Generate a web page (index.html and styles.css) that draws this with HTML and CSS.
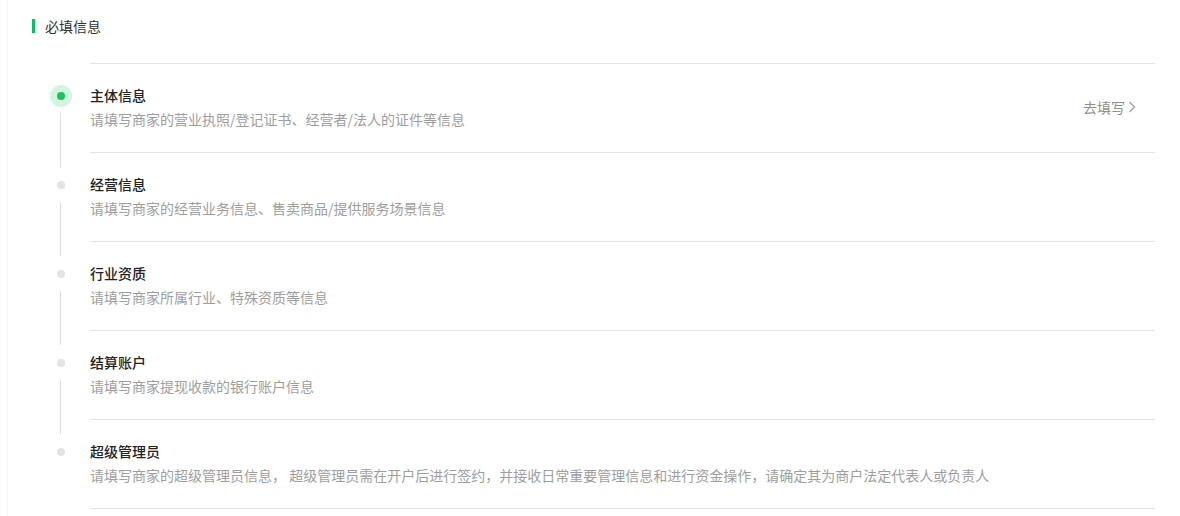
FILE: index.html
```html
<!DOCTYPE html>
<html lang="zh-CN">
<head>
<meta charset="utf-8">
<title>必填信息</title>
<link rel="stylesheet" href="styles.css">
</head>
<body>
<div class="page">
  <div class="section-head">
    <span class="section-bar"></span>
    <span class="section-title">必填信息</span>
  </div>
  <div class="steps">
    <div class="steps-top"></div>
    <div class="step">
      <div class="step-axis">
        <span class="dot dot-active"><span class="dot-core"></span></span>
        <span class="axis-line"></span>
      </div>
      <div class="step-body">
        <div class="step-text">
          <div class="step-title">主体信息</div>
          <div class="step-desc">请填写商家的营业执照/登记证书、经营者/法人的证件等信息</div>
        </div>
        <a class="step-action">去填写<svg class="chev" width="8" height="12" viewBox="0 0 8 12"><polyline points="1.5,1 6.5,6 1.5,11" fill="none" stroke="#9a9a9a" stroke-width="1.2"/></svg></a>
      </div>
    </div>
    <div class="step">
      <div class="step-axis">
        <span class="dot"></span>
        <span class="axis-line"></span>
      </div>
      <div class="step-body">
        <div class="step-text">
          <div class="step-title">经营信息</div>
          <div class="step-desc">请填写商家的经营业务信息、售卖商品/提供服务场景信息</div>
        </div>
      </div>
    </div>
    <div class="step">
      <div class="step-axis">
        <span class="dot"></span>
        <span class="axis-line"></span>
      </div>
      <div class="step-body">
        <div class="step-text">
          <div class="step-title">行业资质</div>
          <div class="step-desc">请填写商家所属行业、特殊资质等信息</div>
        </div>
      </div>
    </div>
    <div class="step">
      <div class="step-axis">
        <span class="dot"></span>
        <span class="axis-line"></span>
      </div>
      <div class="step-body">
        <div class="step-text">
          <div class="step-title">结算账户</div>
          <div class="step-desc">请填写商家提现收款的银行账户信息</div>
        </div>
      </div>
    </div>
    <div class="step">
      <div class="step-axis">
        <span class="dot"></span>
      </div>
      <div class="step-body">
        <div class="step-text">
          <div class="step-title">超级管理员</div>
          <div class="step-desc">请填写商家的超级管理员信息， 超级管理员需在开户后进行签约，并接收日常重要管理信息和进行资金操作，请确定其为商户法定代表人或负责人</div>
        </div>
      </div>
    </div>
  </div>
</div>
</body>
</html>
```

FILE: styles.css
```css
* { box-sizing: border-box; }
html, body {
  margin: 0;
  padding: 0;
  background: #fff;
}
body {
  font-family: "Noto Sans CJK SC", "Noto Sans", sans-serif;
  font-size: 14px;
  color: #333;
}
.page {
  margin-left: 7px;
  border-left: 1px solid #f5f5f5;
  min-height: 516px;
  padding: 16px 25px 0 24px;
}
.section-head {
  display: flex;
  align-items: center;
  height: 20px;
}
.section-bar {
  width: 3px;
  height: 14px;
  background: #07c160;
  margin-right: 10px;
}
.section-title {
  font-size: 14px;
  line-height: 20px;
  color: #333;
}
.steps {
  margin-top: 27px;
}
.steps-top {
  height: 1px;
  margin-left: 58px;
  background: #e5e5e5;
}
.step {
  display: flex;
}
.step-axis {
  position: relative;
  width: 58px;
  flex: none;
}
.dot {
  position: absolute;
  left: 25px;
  top: 28px;
  width: 8px;
  height: 8px;
  border-radius: 50%;
  background: #e3e3e3;
}
.dot-active {
  left: 18px;
  top: 21px;
  width: 22px;
  height: 22px;
  background: #d2f5df;
  display: flex;
  align-items: center;
  justify-content: center;
}
.dot-core {
  width: 8px;
  height: 8px;
  border-radius: 50%;
  background: #1dc25b;
}
.axis-line {
  position: absolute;
  left: 28px;
  top: 49px;
  width: 1px;
  height: 54px;
  background: #dedede;
}
.step-body {
  flex: 1;
  display: flex;
  align-items: center;
  justify-content: space-between;
  padding: 21px 19px 23px 0;
  border-bottom: 1px solid #e5e5e5;
}
.step-title {
  font-size: 14px;
  line-height: 20px;
  font-weight: 500;
  color: #222;
}
.step-desc {
  margin-top: 4px;
  font-size: 14px;
  line-height: 20px;
  color: #9e9e9e;
}
.step-action {
  display: flex;
  align-items: center;
  gap: 3px;
  font-size: 14px;
  line-height: 20px;
  color: #8f8f8f;
  cursor: pointer;
}
.chev {
  display: block;
}
```
